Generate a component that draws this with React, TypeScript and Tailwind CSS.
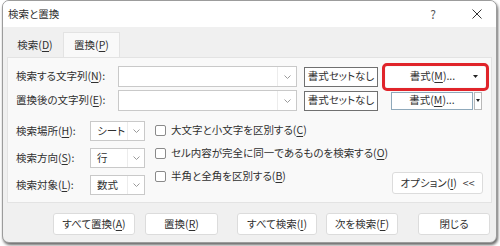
import React from "react";

const font =
  "font-['Noto_Sans_CJK_JP','Noto_Sans',sans-serif] [font-feature-settings:'palt']";

function Key({ k }: { k: string }) {
  return (
    <>
      (<span className="underline underline-offset-[2px]">{k}</span>)
    </>
  );
}

function Chevron() {
  return (
    <svg width="7" height="4" viewBox="0 0 7 4" className="text-[#9a9a9a]">
      <path d="M0.5 0.5 L3.5 3.5 L6.5 0.5" fill="none" stroke="currentColor" strokeWidth="1" />
    </svg>
  );
}

function Tri() {
  return (
    <svg width="5" height="3" viewBox="0 0 5 3">
      <path d="M0 0 H5 L2.5 3 Z" fill="#222" />
    </svg>
  );
}

function ComboInput() {
  return (
    <div className="flex h-[21px] w-[179px] border border-[#c9c9c9] bg-white">
      <div className="flex-1" />
      <div className="flex w-[19px] items-center justify-center border-l border-[#ececec]">
        <Chevron />
      </div>
    </div>
  );
}

function Select({ value }: { value: string }) {
  return (
    <div className="flex h-[20px] w-[55px] border border-[#c9c9c9] bg-white">
      <div className="flex flex-1 items-center pl-[6px]">{value}</div>
      <div className="flex w-[17px] items-center justify-center border-l border-[#ececec]">
        <Chevron />
      </div>
    </div>
  );
}

function Check({ children }: { children: React.ReactNode }) {
  return (
    <div className="flex h-[18px] items-center gap-[5px] whitespace-nowrap">
      <div className="h-[11px] w-[11px] shrink-0 rounded-[2px] border border-[#8a8a8a] bg-white" />
      <span>{children}</span>
    </div>
  );
}

const noFormat =
  "flex h-[20px] w-[74px] items-center justify-center border border-[#707070] bg-white";

const footerBtn =
  "flex h-[22px] items-center justify-center rounded-[3px] border border-[#dcdcdc] bg-white";

export default function App() {
  return (
    <div className={`h-[246px] w-[500px] bg-white pb-[3px] pl-[2px] pr-[3px] text-[10.5px] leading-none text-[#303030] ${font}`}>
      <div className="flex h-[243px] flex-col overflow-hidden rounded-[7px] border border-[#9c9c9c] bg-[#f0f0f0] shadow-[1px_2px_3px_rgba(0,0,0,0.6)]">
        {/* title bar */}
        <div className="flex h-[26px] items-center bg-white pl-[5px]">
          <span>検索と置換</span>
          <span className="ml-auto mr-[36px] text-[12px] text-[#555]">?</span>
          <svg width="10" height="10" viewBox="0 0 10 10" className="mr-[14px] text-[#333]">
            <path d="M0.5 0.5 L9.5 9.5 M9.5 0.5 L0.5 9.5" stroke="currentColor" strokeWidth="1" />
          </svg>
        </div>

        {/* tabs */}
        <div className="flex h-[30px] items-end pl-[4px]">
          <div className="flex h-[24px] w-[56px] items-center justify-center">
            検索<Key k="D" />
          </div>
          <div className="flex h-[25px] w-[57px] items-center justify-center border border-b-0 border-[#e3e3e3] bg-[#f9f9f9]">
            置換<Key k="P" />
          </div>
        </div>

        {/* panel */}
        <div className="mx-[4px] flex h-[146px] flex-col border border-[#e3e3e3] bg-[#f9f9f9] pl-[8px] pt-[8px]">
          <div className="flex h-[21px] items-center">
            <div className="w-[102px]">
              検索する文字列<Key k="N" />:
            </div>
            <ComboInput />
            <div className={`ml-[7px] ${noFormat}`}>書式セットなし</div>
            <div className="ml-[4px] flex h-[28px] w-[107px] items-center rounded-[5px] border-[3px] border-[#e0242a] px-[1px]">
              <div className="flex h-[20px] flex-1 items-center bg-white">
                <span className="flex-1 pl-[6px] text-center">
                  書式<Key k="M" />...
                </span>
                <span className="mr-[7px] flex">
                  <Tri />
                </span>
              </div>
            </div>
          </div>

          <div className="mt-[3px] flex h-[21px] items-center">
            <div className="w-[102px]">
              置換後の文字列<Key k="E" />:
            </div>
            <ComboInput />
            <div className={`ml-[7px] ${noFormat}`}>書式セットなし</div>
            <div className="ml-[13px] flex h-[18px] w-[82px] items-center justify-center border border-[#8fa9bb] bg-white">
              書式<Key k="M" />...
            </div>
            <div className="ml-[1px] flex h-[18px] w-[8px] items-center justify-center border border-[#b9b9b9] bg-white">
              <svg width="4" height="3" viewBox="0 0 4 3">
                <path d="M0 0 H4 L2 3 Z" fill="#222" />
              </svg>
            </div>
          </div>

          <div className="mt-[10px] flex items-end">
            <div className="flex shrink-0 flex-col gap-[7px]">
              <div className="flex h-[20px] items-center">
                <div className="w-[74px]">
                  検索場所<Key k="H" />:
                </div>
                <Select value="シート" />
              </div>
              <div className="flex h-[20px] items-center">
                <div className="w-[74px]">
                  検索方向<Key k="S" />:
                </div>
                <Select value="行" />
              </div>
              <div className="flex h-[20px] items-center">
                <div className="w-[74px]">
                  検索対象<Key k="L" />:
                </div>
                <Select value="数式" />
              </div>
            </div>

            <div className="ml-[10px] flex min-w-0 flex-1 flex-col gap-[5px] self-start">
              <Check>
                大文字と小文字を区別する<Key k="C" />
              </Check>
              <Check>
                セル内容が完全に同一であるものを検索する<Key k="O" />
              </Check>
              <Check>
                半角と全角を区別する<Key k="B" />
              </Check>
            </div>

            <div className="mb-[1px] mr-[8px] flex h-[22px] w-[91px] shrink-0 items-center justify-center gap-[6px] rounded-[3px] border border-[#dcdcdc] bg-white">
              <span>
                オプション<Key k="I" />
              </span>
              <span>&lt;&lt;</span>
            </div>
          </div>
        </div>

        {/* footer buttons */}
        <div className="flex pl-[50px] pt-[10px]">
          <div className={`w-[82px] ${footerBtn}`}>
            すべて置換<Key k="A" />
          </div>
          <div className={`ml-[10px] w-[73px] ${footerBtn}`}>
            置換<Key k="R" />
          </div>
          <div className={`ml-[19px] w-[80px] ${footerBtn}`}>
            すべて検索<Key k="I" />
          </div>
          <div className={`ml-[9px] w-[72px] ${footerBtn}`}>
            次を検索<Key k="F" />
          </div>
          <div className={`ml-[20px] w-[72px] ${footerBtn}`}>閉じる</div>
        </div>
      </div>
    </div>
  );
}
